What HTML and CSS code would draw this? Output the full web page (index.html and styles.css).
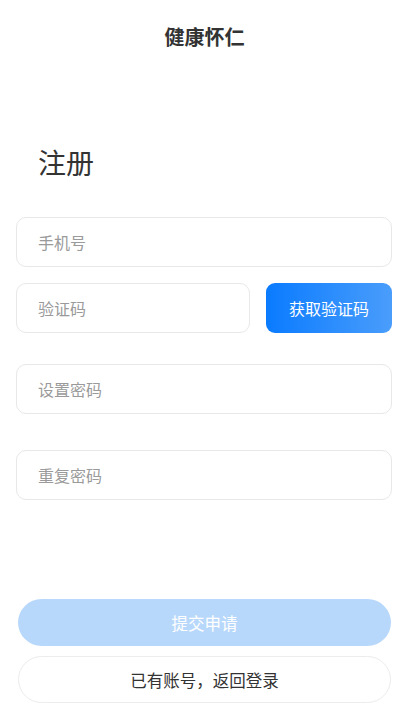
FILE: index.html
```html
<!DOCTYPE html>
<html lang="zh-CN">
<head>
<meta charset="utf-8">
<meta name="viewport" content="width=device-width, initial-scale=1">
<title>健康怀仁</title>
<link rel="stylesheet" href="styles.css">
</head>
<body>
<div class="page">
  <header class="topbar">健康怀仁</header>
  <main class="content">
    <h1 class="page-title">注册</h1>
    <form class="form">
      <div class="field field-phone"><input class="input" type="text" placeholder="手机号"></div>
      <div class="code-row">
        <div class="field field-code"><input class="input" type="text" placeholder="验证码"></div>
        <button type="button" class="code-btn">获取验证码</button>
      </div>
      <div class="field field-pass"><input class="input" type="password" placeholder="设置密码"></div>
      <div class="field field-repeat"><input class="input" type="password" placeholder="重复密码"></div>
    </form>
    <div class="actions">
      <button type="button" class="btn btn-submit">提交申请</button>
      <button type="button" class="btn btn-login">已有账号，返回登录</button>
    </div>
  </main>
</div>
</body>
</html>
```
FILE: styles.css
```css
* { box-sizing: border-box; }
html, body {
  margin: 0;
  padding: 0;
  background: #ffffff;
  font-family: "Noto Sans CJK SC", "Noto Sans", sans-serif;
  color: #333333;
}
.page {
  width: 409px;
  min-height: 728px;
}
.topbar {
  height: 72px;
  display: flex;
  align-items: center;
  justify-content: center;
  font-size: 20px;
  font-weight: 700;
  color: #333333;
}
.content {
  padding: 0 16px 0 16px;
}
.page-title {
  margin: 70px 0 0 22px;
  height: 40px;
  line-height: 40px;
  font-size: 28px;
  font-weight: 400;
  color: #333333;
}
.form {
  display: flex;
  flex-direction: column;
  margin-top: 35px;
  margin-right: 1px;
}
.field {
  height: 50px;
  border: 1px solid #e8e8e8;
  border-radius: 10px;
  display: flex;
  align-items: center;
  padding-left: 21px;
}
.input {
  width: 100%;
  border: 0;
  outline: none;
  background: transparent;
  font-family: inherit;
  font-size: 16px;
  color: #333333;
  padding: 0;
}
.input::placeholder {
  color: #9a9a9a;
}
.code-row {
  display: flex;
  gap: 16px;
  margin-top: 16px;
}
.field-code {
  width: 234px;
}
.code-btn {
  flex: 1;
  height: 50px;
  border: 0;
  border-radius: 9px;
  background: linear-gradient(90deg, #0a7bff 0%, #4a9dfb 100%);
  color: #ffffff;
  font-family: inherit;
  font-size: 16px;
  padding: 0;
}
.field-pass {
  margin-top: 31px;
}
.field-repeat {
  margin-top: 36px;
}
.actions {
  display: flex;
  flex-direction: column;
  gap: 10px;
  margin-top: 99px;
  padding: 0 2px;
}
.btn {
  height: 47px;
  border-radius: 24px;
  font-family: inherit;
  font-size: 16.5px;
}
.btn-submit {
  border: 0;
  background: #b8d8fb;
  color: #ffffff;
}
.btn-login {
  background: #ffffff;
  border: 1px solid #ececec;
  color: #333333;
}
```
